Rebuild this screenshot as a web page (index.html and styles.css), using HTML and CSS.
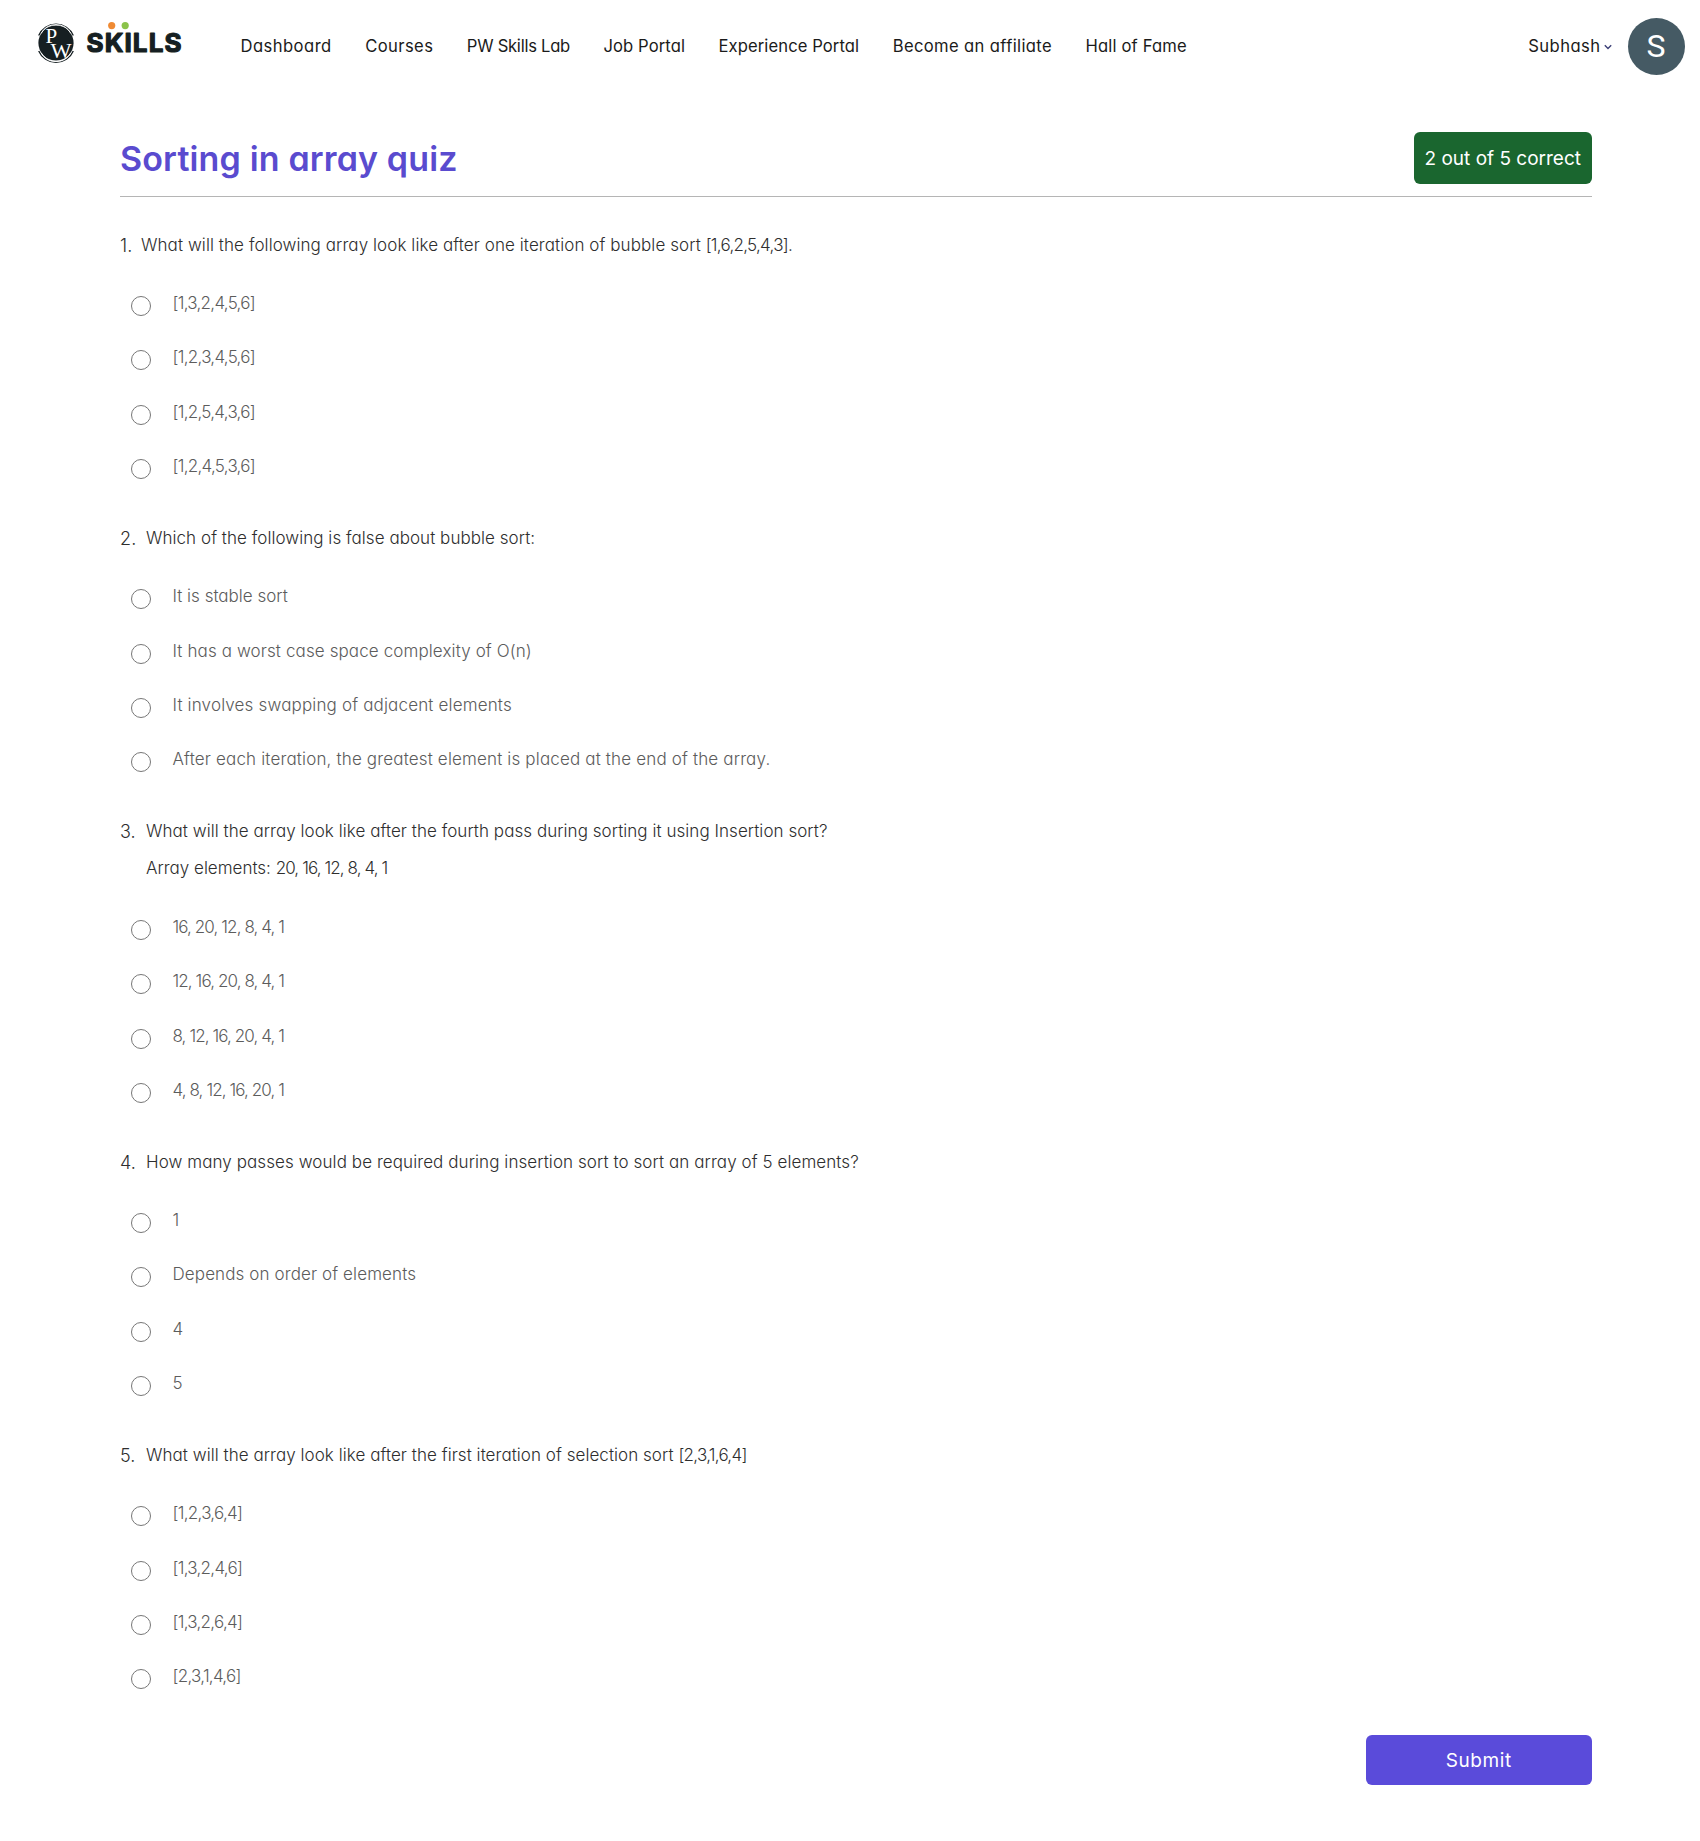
FILE: index.html
```html
<!DOCTYPE html>
<html lang="en">
<head>
<meta charset="utf-8">
<title>Sorting in array quiz</title>
<link rel="stylesheet" href="styles.css">
</head>
<body>
<header class="topbar">
  <a class="brand">
    <svg width="156" height="50" viewBox="0 0 156 50" role="img" aria-label="PW Skills">
      <circle cx="20" cy="25" r="17.6" fill="#161f22"/>
      <path d="M2.7 17.5A18.8 18.8 0 0 1 37.3 17.5M2.7 33A18.8 18.8 0 0 0 37.3 33" fill="none" stroke="#161f22" stroke-width="1.3"/>
      <path d="M5 15.6A17 17 0 0 1 35 15.6M5 34.6A17 17 0 0 0 35 34.6" fill="none" stroke="#fff" stroke-width="1"/>
      <text x="9.5" y="25" class="mono">P</text>
      <text x="14.5" y="39.5" class="mono" textLength="21" lengthAdjust="spacingAndGlyphs">W</text>
      <text x="50.5" y="33.5" class="wordmark" textLength="95" lengthAdjust="spacing">SKILLS</text>
      <circle cx="75.7" cy="7.6" r="3.6" fill="#ef8a33"/>
      <circle cx="89.2" cy="7.6" r="3.6" fill="#8bc34a"/>
    </svg>
  </a>
  <nav class="nav">
    <a class="ls-48">Dashboard</a>
    <a class="ls-40">Courses</a>
    <a class="ls-neg">PW Skills Lab</a>
    <a class="ls-9">Job Portal</a>
    <a class="ls-9">Experience Portal</a>
    <a class="ls-38">Become an affiliate</a>
    <a class="ls-23">Hall of Fame</a>
  </nav>
  <div class="user">
    <span class="user-name ls-48">Subhash</span>
    <svg width="10" height="8" viewBox="0 0 10 8"><path d="M1.8 2.2L5 5.4L8.2 2.2" fill="none" stroke="#3b3f77" stroke-width="1.4"/></svg>
    <span class="avatar">S</span>
  </div>
</header>

<main class="quiz">
  <div class="quiz-head">
    <h1>Sorting in array quiz</h1>
    <span class="score">2 out of 5 correct</span>
  </div>

  <section class="question">
    <div class="prompt"><span class="no">1.</span><p>What will the following array look like after one iteration of bubble sort <span class="list">[1,6,2,5,4,3]</span>.</p></div>
    <label class="option"><input type="radio" name="q1"><span class="list">[1,3,2,4,5,6]</span></label>
    <label class="option"><input type="radio" name="q1"><span class="list">[1,2,3,4,5,6]</span></label>
    <label class="option"><input type="radio" name="q1"><span class="list">[1,2,5,4,3,6]</span></label>
    <label class="option"><input type="radio" name="q1"><span class="list">[1,2,4,5,3,6]</span></label>
  </section>

  <section class="question">
    <div class="prompt"><span class="no">2.</span><p class="ls-5">Which of the following is false about bubble sort:</p></div>
    <label class="option"><input type="radio" name="q2"><span>It is stable sort</span></label>
    <label class="option"><input type="radio" name="q2"><span class="ls-11">It has a worst case space complexity of O(n)</span></label>
    <label class="option"><input type="radio" name="q2"><span class="ls-16">It involves swapping of adjacent elements</span></label>
    <label class="option"><input type="radio" name="q2"><span class="ls-16">After each iteration, the greatest element is placed at the end of the array.</span></label>
  </section>

  <section class="question">
    <div class="prompt"><span class="no">3.</span><p><span class="ls-5">What will the array look like after the fourth pass during sorting it using Insertion sort?</span><br><span class="ls-0">Array elements: </span><span class="series">20, 16, 12, 8, 4, 1</span></p></div>
    <label class="option"><input type="radio" name="q3"><span class="series">16, 20, 12, 8, 4, 1</span></label>
    <label class="option"><input type="radio" name="q3"><span class="series">12, 16, 20, 8, 4, 1</span></label>
    <label class="option"><input type="radio" name="q3"><span class="series">8, 12, 16, 20, 4, 1</span></label>
    <label class="option"><input type="radio" name="q3"><span class="series">4, 8, 12, 16, 20, 1</span></label>
  </section>

  <section class="question">
    <div class="prompt"><span class="no">4.</span><p>How many passes would be required during insertion sort to sort an array of 5 elements?</p></div>
    <label class="option"><input type="radio" name="q4"><span>1</span></label>
    <label class="option"><input type="radio" name="q4"><span class="ls-11">Depends on order of elements</span></label>
    <label class="option"><input type="radio" name="q4"><span>4</span></label>
    <label class="option"><input type="radio" name="q4"><span>5</span></label>
  </section>

  <section class="question">
    <div class="prompt"><span class="no">5.</span><p class="ls-5">What will the array look like after the first iteration of selection sort <span class="list">[2,3,1,6,4]</span></p></div>
    <label class="option"><input type="radio" name="q5"><span class="list">[1,2,3,6,4]</span></label>
    <label class="option"><input type="radio" name="q5"><span class="list">[1,3,2,4,6]</span></label>
    <label class="option"><input type="radio" name="q5"><span class="list">[1,3,2,6,4]</span></label>
    <label class="option"><input type="radio" name="q5"><span class="list">[2,3,1,4,6]</span></label>
  </section>

  <button class="submit" type="button">Submit</button>
</main>
</body>
</html>
```
FILE: styles.css
```css
* { box-sizing: border-box; }

body {
  margin: 0;
  min-height: 1841px;
  background: #fff;
  color: #1b1b1b;
  font-family: "Inter", "Liberation Sans", sans-serif;
  font-feature-settings: "cv11";
}

h1, p { margin: 0; }

/* Header */
.topbar {
  display: flex;
  align-items: center;
  height: 92px;
  padding: 0 15.5px 0 36px;
}
.brand { display: flex; width: 204.5px; padding-bottom: 6px; }
.mono { font: 21px "Liberation Serif", serif; fill: #fff; }
.wordmark {
  font: 700 26px "Inter", sans-serif;
  fill: #161f22;
  stroke: #161f22;
  stroke-width: 1.2;
  stroke-linejoin: round;
}
.nav {
  display: flex;
  gap: 33.5px;
  font-size: 16.6px;
  line-height: 24px;
}
.user {
  display: flex;
  align-items: center;
  margin-left: auto;
  font-size: 16.6px;
}
.user svg { margin: 1px 15px 0 2px; }
.avatar {
  display: flex;
  align-items: center;
  justify-content: center;
  width: 57px;
  height: 57px;
  border-radius: 50%;
  background: #455a64;
  color: #fff;
  font: 32px Roboto, sans-serif;
}

/* Quiz */
.quiz {
  display: flex;
  flex-direction: column;
  padding: 39.5px 108px 0 120px;
}
.quiz-head {
  display: flex;
  justify-content: space-between;
  height: 65.5px;
  border-bottom: 1px solid #b5b5b5;
  margin-bottom: 29.6px;
}
h1 {
  color: #5a4bcf;
  font-size: 34px;
  font-weight: 600;
  line-height: 53px;
  letter-spacing: 0.15px;
}
.score {
  width: 178.5px;
  height: 52.5px;
  border-radius: 6px;
  background: #1a662f;
  color: #fff;
  font-size: 19px;
  line-height: 53px;
  text-align: center;
}
.question {
  margin-bottom: 23.2px;
  font-size: 17px;
  font-weight: 300;
}
.prompt {
  display: flex;
  margin-bottom: 14.6px;
  color: #2e2e2e;
  line-height: 37.6px;
  letter-spacing: 0.08px;
}
.no { width: 26px; font-size: 18px; }
.question:first-of-type .no { width: 21px; }
.option {
  display: flex;
  align-items: center;
  height: 54.45px;
  color: #5c5c5c;
}
.option input {
  appearance: none;
  width: 20px;
  height: 20px;
  margin: 0 21.5px 0 11px;
  border: 1.4px solid #777;
  border-radius: 50%;
}
.option span { padding-bottom: 6px; }
.submit {
  align-self: flex-end;
  width: 226.5px;
  height: 50px;
  margin-top: 5.4px;
  border: 0;
  border-radius: 6px;
  background: #5a4bda;
  color: #fff;
  font: 400 19px "Inter", sans-serif;
  font-feature-settings: "cv11";
  letter-spacing: 0.6px;
}

/* Tracking */
.list { letter-spacing: -0.71px; }
.series { letter-spacing: -0.9px; }
.ls-neg { letter-spacing: -0.26px; }
.ls-0 { letter-spacing: 0; }
.ls-5 { letter-spacing: 0.05px; }
.ls-9 { letter-spacing: 0.09px; }
.ls-11 { letter-spacing: 0.11px; }
.ls-16 { letter-spacing: 0.16px; }
.ls-23 { letter-spacing: 0.16px; }
.ls-38 { letter-spacing: 0.36px; }
.ls-40 { letter-spacing: 0.4px; }
.ls-48 { letter-spacing: 0.45px; }
```
